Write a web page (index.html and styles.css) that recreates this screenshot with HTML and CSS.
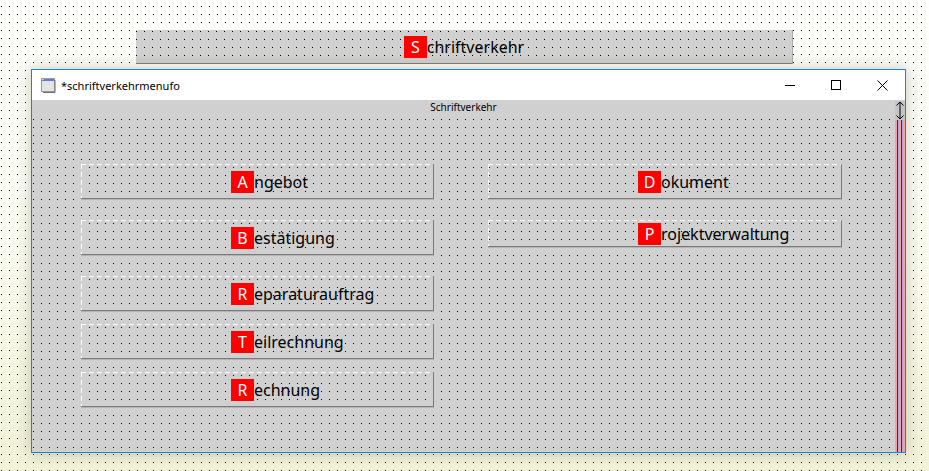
FILE: index.html
```html
<!DOCTYPE html>
<html lang="de">
<head>
    <meta charset="UTF-8">
    <title>Schriftverkehr</title>
    <link rel="stylesheet" href="styles.css">
</head>
<body class="dots">
<div class="topbar dots">
    <span class="key">S</span><span>chriftverkehr</span>
</div>

<div class="window">
    <div class="titlebar">
        <svg class="appicon" width="16" height="16" viewBox="0 0 16 16">
            <rect x="1.5" y="1.5" width="13" height="13" fill="#e4e4e4" stroke="#9a9a9a"/>
            <rect x="2" y="2" width="12" height="2" fill="#5b7fd6"/>
            <rect x="2" y="2" width="2" height="1" fill="#e8d34a"/>
            <line x1="15" y1="3" x2="15" y2="15.5" stroke="#6e6e6e"/>
            <line x1="3" y1="15.5" x2="15" y2="15.5" stroke="#6e6e6e"/>
        </svg>
        <span class="title">*schriftverkehrmenufo</span>
        <div class="controls">
            <div class="ctl">
                <svg width="10" height="10" viewBox="0 0 10 10"><line x1="0" y1="5.5" x2="10" y2="5.5" stroke="#000"/></svg>
            </div>
            <div class="ctl">
                <svg width="10" height="10" viewBox="0 0 10 10"><rect x="0.5" y="0.5" width="9" height="9" fill="none" stroke="#000"/></svg>
            </div>
            <div class="ctl">
                <svg width="11" height="11" viewBox="0 0 11 11"><path d="M0.5 0.5 L10.5 10.5 M10.5 0.5 L0.5 10.5" stroke="#000" fill="none"/></svg>
            </div>
        </div>
    </div>

    <div class="client">
        <div class="main">
            <div class="caption">Schriftverkehr</div>
            <div class="panel dots">
                <div class="col col-left">
                    <div class="btn"><span class="key">A</span>ngebot</div>
                    <div class="btn gap-lg"><span class="key">B</span>estätigung</div>
                    <div class="btn gap-lg"><span class="key">R</span>eparaturauftrag</div>
                    <div class="btn gap-sm"><span class="key">T</span>eilrechnung</div>
                    <div class="btn gap-sm"><span class="key">R</span>echnung</div>
                </div>
                <div class="col col-right">
                    <div class="btn"><span class="key">D</span>okument</div>
                    <div class="btn btn-short gap-lg"><span class="key">P</span>rojektverwaltung</div>
                </div>
            </div>
        </div>
        <div class="side">
            <div class="sizer">
                <svg width="10" height="19" viewBox="0 0 10 19">
                    <path d="M5 1 V18 M1.5 4.5 L5 1 L8.5 4.5 M1.5 14.5 L5 18 L8.5 14.5" stroke="#000" fill="none"/>
                </svg>
            </div>
            <div class="stripes"></div>
        </div>
    </div>
</div>
</body>
</html>
```

FILE: styles.css
```css
html, body {
  margin: 0;
  height: 100%;
}
body {
  font-family: "Noto Sans", "Open Sans", sans-serif;
  background: linear-gradient(to bottom, #fefefc 0%, #fafbf0 55%, #f1f2d7 100%);
  overflow: hidden;
  --dx: 1px;
  --dy: 6px;
}

/* 1px dot grid, 8px apart */
.dots {
  position: relative;
}
.dots::before {
  content: "";
  position: absolute;
  inset: 0;
  pointer-events: none;
  background: linear-gradient(90deg, #000 1px, transparent 1px);
  background-size: 8px 8px;
  background-position: var(--dx) 0;
  -webkit-mask-image: linear-gradient(#000 1px, transparent 1px);
  -webkit-mask-size: 8px 8px;
  -webkit-mask-position: 0 var(--dy);
  mask-image: linear-gradient(#000 1px, transparent 1px);
  mask-size: 8px 8px;
  mask-position: 0 var(--dy);
}
.dots > * {
  position: relative;
}

.key {
  display: inline-block;
  width: 23px;
  height: 22px;
  line-height: 22px;
  background: #ff0000;
  color: #fff;
  text-align: center;
}

/* top bar */
.topbar {
  margin: 30px 0 0 136px;
  width: 656px;
  height: 33px;
  display: flex;
  align-items: center;
  justify-content: center;
  font-size: 16px;
  color: #000;
  background: #d0d0d0;
  border-bottom: 1px solid #7c7c7c;
  border-right: 1px solid #a8a8a8;
  --dx: 0px;
  --dy: 1px;
}

/* window */
.window {
  margin: 5px 0 0 31px;
  width: 873px;
  height: 382px;
  border: 1px solid #1883d7;
  background: #fff;
  box-shadow: 0 0 14px 2px rgba(90, 90, 60, 0.25);
  display: flex;
  flex-direction: column;
}
.titlebar {
  height: 30px;
  display: flex;
  align-items: center;
  background: #fff;
}
.appicon {
  margin-left: 8px;
}
.title {
  margin-left: 5px;
  font-size: 11px;
  color: #000;
}
.controls {
  margin-left: auto;
  display: flex;
  height: 30px;
}
.ctl {
  width: 46px;
  height: 30px;
  display: flex;
  align-items: center;
  justify-content: center;
}

.client {
  flex: 1;
  display: flex;
  background: #d0d0d0;
}
.main {
  flex: 1;
  display: flex;
  flex-direction: column;
}
.caption {
  height: 15px;
  line-height: 15px;
  font-size: 10px;
  text-align: center;
  color: #000;
}
.panel {
  flex: 1;
  display: flex;
  gap: 54px;
  padding: 49px 0 0 49px;
  --dx: 1px;
  --dy: 4px;
}
.col {
  display: flex;
  flex-direction: column;
}
.col-left {
  width: 353px;
}
.col-right {
  width: 354px;
}
.btn {
  height: 33px;
  display: flex;
  align-items: center;
  padding: 1px 0 0 150px;
  font-size: 16px;
  color: #000;
  border-bottom: 1px solid #7a7a7a;
  border-right: 1px solid #7a7a7a;
  box-shadow: 0 1px 0 #b4b4b4;
  background:
    repeating-linear-gradient(90deg, #fff 0 5px, transparent 5px 8px) top left / 100% 1px no-repeat,
    repeating-linear-gradient(180deg, #fff 0 5px, transparent 5px 8px) top left / 1px 100% no-repeat;
}
.btn-short {
  height: 25px;
}
.gap-lg {
  margin-top: 21px;
}
.gap-sm {
  margin-top: 13px;
}

.side {
  width: 10px;
  display: flex;
  flex-direction: column;
}
.sizer {
  height: 19px;
  margin-top: 1px;
  background: #c4c4c4;
}
.sizer svg {
  display: block;
}
.stripes {
  flex: 1;
  background: linear-gradient(to right,
    #f2a2a2 0, #f2a2a2 2px,
    #2b2b7a 2px, #2b2b7a 3px,
    #b9a6d8 3px, #b9a6d8 4px,
    #f2a2a2 4px, #f2a2a2 6px,
    #2b2b7a 6px, #2b2b7a 7px,
    #b9a6d8 7px, #b9a6d8 8px,
    #f2a2a2 8px, #f2a2a2 10px);
}
```
